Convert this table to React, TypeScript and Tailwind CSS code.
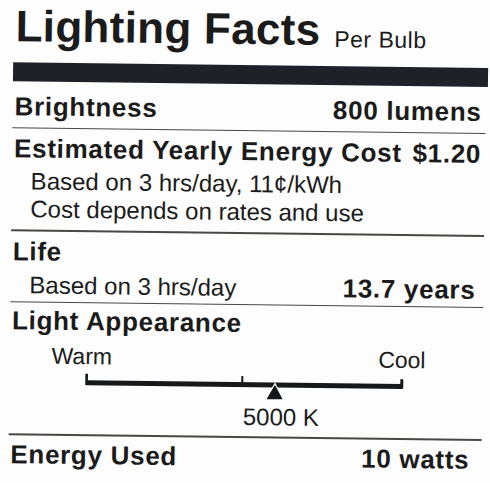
import React from 'react'

const bold = "font-bold text-[26px] leading-[32px] tracking-[0.7px]"
const plain = "text-[24px] leading-[28px]"

function Rule({ className = "" }: { className?: string }) {
  return <div className={`h-[1.5px] bg-[#4a4744] mr-[2px] ${className}`} />
}

function Scale() {
  return (
    <svg width="330" height="32" viewBox="0 0 330 32" className="ml-[69px] block">
      <rect x="8" y="11.1" width="316" height="5" fill="#16181c" />
      <rect x="7" y="4.6" width="2.6" height="11.3" fill="#16181c" />
      <rect x="163" y="5" width="2" height="8" fill="#16181c" />
      <rect x="322" y="6.4" width="3" height="9.5" fill="#16181c" />
      <polygon points="196.7,12.5 188,27.9 205,27.9" fill="#16181c" stroke="#fdfdfd" strokeWidth="1.5" strokeLinejoin="miter" />
      <polygon points="196.7,13.5 188.5,27.9 204.5,27.9" fill="#16181c" />
    </svg>
  )
}

export default function App() {
  return (
    <div className="w-[490px] h-[483px] bg-[#fdfdfd] overflow-hidden">
      <div
        className="h-[483px] rotate-[0.7deg] pl-[11px] pr-[4px] pt-[7px] text-[#1b1b1b]"
        style={{ fontFamily: '"Liberation Sans", Arial, sans-serif' }}
      >
        {/* title */}
        <div className="flex items-baseline pl-[2px]">
          <h1 className="font-bold text-[44px] leading-[44px] tracking-[0.3px]">Lighting Facts</h1>
          <span className="ml-[14px] text-[23px] tracking-[0.5px] translate-y-[2px]">Per Bulb</span>
        </div>
        <div className="mt-[11px] h-[19px] bg-[#1e2127]" />

        <div className={`mt-[9px] flex justify-between pl-[2px] pr-[6px] ${bold}`}>
          <span>Brightness</span>
          <span>800 lumens</span>
        </div>
        <Rule className="mt-[5px]" />

        <div className={`mt-[4px] flex justify-between pl-[2px] pr-[6px] ${bold}`}>
          <span>Estimated Yearly Energy Cost</span>
          <span>$1.20</span>
        </div>
        <div className={`mt-[3px] pl-[19px] ${plain}`}>Based on 3 hrs/day, 11¢/kWh</div>
        <div className={`pl-[19px] ${plain}`}>Cost depends on rates and use</div>
        <Rule className="mt-[6px]" />

        <div className={`mt-[4px] pl-[2px] ${bold}`}>Life</div>
        <div className="mt-[1px] flex items-baseline justify-between pl-[19px] pr-[10px]">
          <span className={plain}>Based on 3 hrs/day</span>
          <span className={bold}>13.7 years</span>
        </div>
        <Rule className="mt-[1px]" />

        <div className={`mt-[2px] pl-[2px] ${bold}`}>Light Appearance</div>
        <div className="mt-[6px] flex w-[416px] justify-between pl-[42px] text-[23px] leading-[26px]">
          <span>Warm</span>
          <span>Cool</span>
        </div>
        <Scale />
        <div className={`pl-[234px] ${plain}`}>5000 K</div>
        <Rule className="mt-[5px]" />

        <div className={`mt-[3px] flex justify-between pl-[2px] pr-[14px] ${bold}`}>
          <span>Energy Used</span>
          <span>10 watts</span>
        </div>
      </div>
    </div>
  )
}
